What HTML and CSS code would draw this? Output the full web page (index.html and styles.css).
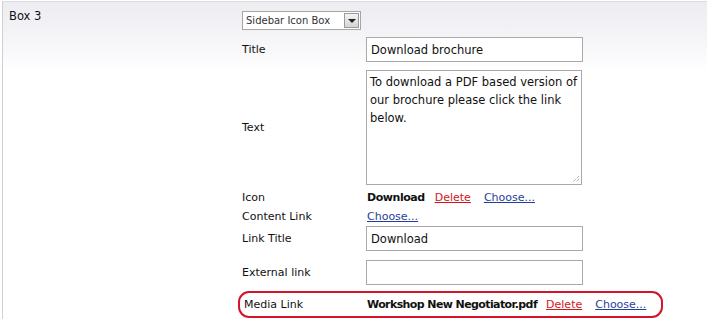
FILE: index.html
```html
<!DOCTYPE html>
<html lang="en">
<head>
    <meta charset="UTF-8">
    <title>Box 3</title>
    <link rel="stylesheet" href="styles.css">
</head>
<body>
    <div class="box">
        <div class="box-name">Box 3</div>

        <div class="box-body">
            <div class="select">
                <span class="select-value">Sidebar Icon Box</span>
                <span class="select-button"><span class="arrow"></span></span>
            </div>

            <div class="field">
                <div class="label">Title</div>
                <div class="input">Download brochure</div>
            </div>

            <div class="field">
                <div class="label">Text</div>
                <div class="textarea">To download a PDF based version of our brochure please click the link below.<svg class="grip" width="9" height="9" viewBox="0 0 9 9"><path d="M8 2 L2 8 M8 5 L5 8" stroke="#888" stroke-width="1" stroke-dasharray="1 1"/></svg></div>
            </div>

            <div class="field field-text">
                <div class="label">Icon</div>
                <div class="value">
                    <b>Download</b>
                    <a href="#" class="delete">Delete</a>
                    <a href="#" class="choose">Choose...</a>
                </div>
            </div>

            <div class="field field-text">
                <div class="label">Content Link</div>
                <div class="value">
                    <a href="#" class="choose">Choose...</a>
                </div>
            </div>

            <div class="field">
                <div class="label">Link Title</div>
                <div class="input">Download</div>
            </div>

            <div class="field field-last">
                <div class="label">External link</div>
                <div class="input"></div>
            </div>

            <div class="field field-text highlight">
                <div class="label">Media Link</div>
                <div class="value">
                    <b>Workshop New Negotiator.pdf</b>
                    <a href="#" class="delete">Delete</a>
                    <a href="#" class="choose">Choose...</a>
                </div>
            </div>
        </div>
    </div>
</body>
</html>
```

FILE: styles.css
```css
* {
    margin: 0;
    padding: 0;
    box-sizing: border-box;
}

body {
    background: #ffffff;
    font-family: Tahoma, "DejaVu Sans", sans-serif;
    font-size: 11px;
    color: #111;
    padding: 1px 0 0 2px;
    overflow: hidden;
}

.box {
    display: flex;
    border-top: 1px solid #dcdce0;
    border-left: 1px solid #cfcfd4;
    background: linear-gradient(to bottom, #ececf1 0px, #f6f6f9 40px, #ffffff 70px);
    height: 330px;
}

.box-name {
    width: 239px;
    padding: 7px 0 0 6px;
    font-size: 11.5px;
}

.box-body {
    padding-top: 9px;
}

/* dropdown */
.select {
    display: flex;
    align-items: center;
    width: 119px;
    height: 19px;
    border: 1px solid #a6a6a6;
    background: #fff;
    margin-bottom: 3px;
}

.select-value {
    flex: 1;
    padding-left: 3px;
    font-size: 10px;
    color: #333;
}

.select-button {
    width: 15px;
    height: 15px;
    margin-right: 1px;
    border: 1px solid #9a9a9a;
    background: linear-gradient(#f4f4f4, #d4d4d4);
    display: flex;
    align-items: center;
    justify-content: center;
}

.arrow {
    border-left: 4px solid transparent;
    border-right: 4px solid transparent;
    border-top: 4px solid #222;
}

/* form rows */
.field {
    display: flex;
    align-items: center;
    padding: 4px 0;
}

.field-last {
    padding-top: 5px;
}

.label {
    width: 124px;
}

.input {
    width: 217px;
    height: 25px;
    border: 1px solid #a9a9a9;
    background: #fff;
    padding: 5px 4px;
    font-size: 11.5px;
}

.textarea {
    position: relative;
    width: 216px;
    height: 115px;
    border: 1px solid #a9a9a9;
    background: #fff;
    padding: 2px 3px;
    font-size: 11.5px;
    line-height: 18px;
}

.grip {
    position: absolute;
    right: 1px;
    bottom: 1px;
}

.field-text {
    padding: 0;
    height: 17px;
    line-height: 17px;
}

.field-text + .field {
    padding-top: 3px;
}

.value {
    display: flex;
    white-space: nowrap;
    padding-left: 1px;
}

.value b {
    margin-right: 10px;
    letter-spacing: -0.45px;
}

.value a {
    text-decoration: underline;
}

.delete {
    color: #d4141c;
    margin-right: 13px;
}

.choose {
    color: #1f3f9b;
}

.highlight {
    margin-top: 2px;
    margin-left: -4px;
    width: 425px;
    height: 27px;
    padding-left: 4px;
    border: 2px solid #d3142a;
    border-radius: 11px;
}

.highlight .label {
    width: 122px;
}

.highlight b {
    margin-right: 9px;
    letter-spacing: -0.6px;
}
```
